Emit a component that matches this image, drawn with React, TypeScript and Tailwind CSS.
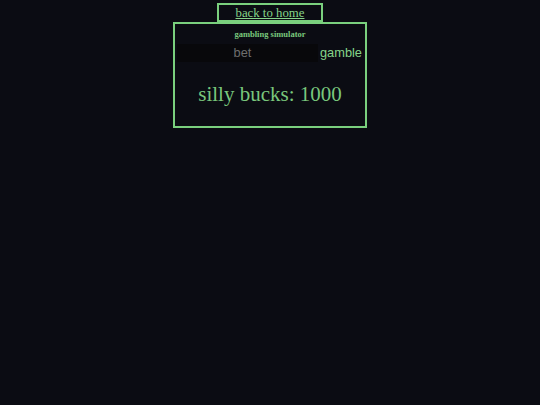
export default function App() {
  return (
    <div className="min-h-screen bg-[#0b0c13] font-['Liberation_Serif',serif] text-[#79c77c]">
      <div className="flex flex-col items-center pt-[3px]">
        <div className="flex h-[19px] w-[106px] items-center justify-center border-2 border-[#7ad07e] pt-[1px]">
          <a href="#" className="text-[12.8px] leading-none text-[#86d489] underline">
            back to home
          </a>
        </div>
        <div className="flex h-[106px] w-[194px] flex-col border-2 border-[#7ad07e]">
          <h1 className="pt-[5px] text-center text-[8.5px] font-bold leading-[10px]">gambling simulator</h1>
          <div className="mt-[5px] flex items-center pl-[2px]">
            <input
              placeholder="bet"
              className="h-[18px] w-[141px] bg-[#08080b] pr-[10px] text-center font-['Liberation_Sans',sans-serif] text-[12.8px] text-[#888] outline-none placeholder:text-[#6e6e6e]"
            />
            <button className="ml-[2px] font-['Liberation_Sans',sans-serif] text-[12.8px] leading-none text-[#86d489]">
              gamble
            </button>
          </div>
          <p className="mt-[20px] text-center text-[21px] leading-[24px]">silly bucks: 1000</p>
        </div>
      </div>
    </div>
  );
}
